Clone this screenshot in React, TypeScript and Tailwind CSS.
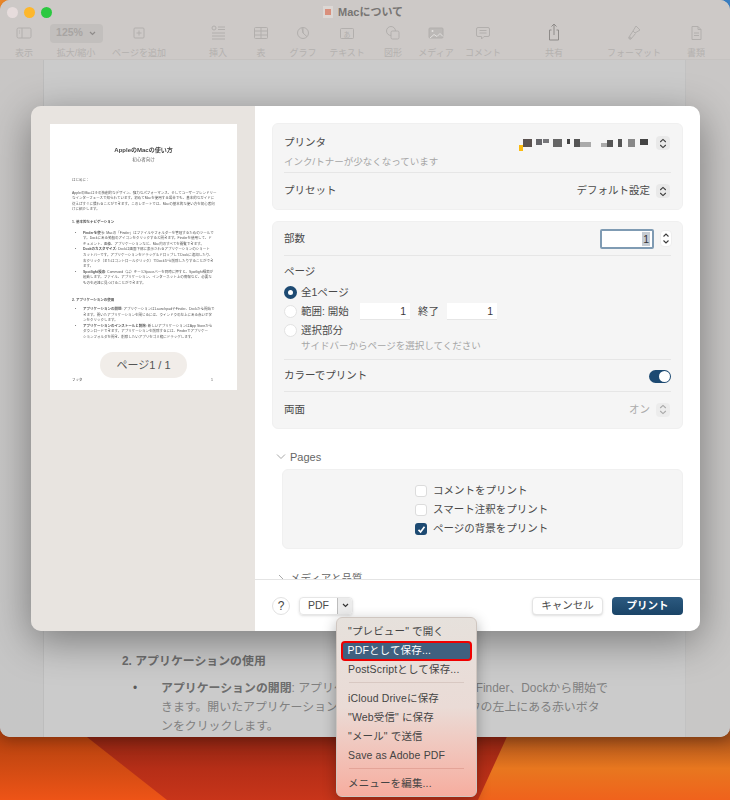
import React from "react";

const TI = ({ children }: { children: React.ReactNode }) => (
  <svg width="24" height="20" viewBox="0 0 24 20" fill="none" stroke="#b2afad" strokeWidth="1">{children}</svg>
);

const Stepper = ({ dim }: { dim?: boolean }) => (
  <div className={dim ? "w-[14px] h-[14px] rounded-[4px] bg-[#ececec] flex items-center justify-center" : "w-[14px] h-[14px] rounded-[4px] bg-[#e9e9e9] flex items-center justify-center"}>
    <svg width="8" height="11" viewBox="0 0 8 11" fill="none" stroke={dim ? "#a8a8a8" : "#3c3c3c"} strokeWidth="1.1">
      <path d="M1.2 4 4 1.4 6.8 4" />
      <path d="M1.2 7 4 9.6 6.8 7" />
    </svg>
  </div>
);

const Tool = ({ cls, label, icon }: { cls: string; label: string; icon: React.ReactNode }) => (
  <div className={"flex flex-col items-center shrink-0 " + cls}>
    <div className="h-[20px] flex items-center justify-center">{icon}</div>
    <div className="mt-[4px] text-[9px] leading-[12px] text-[#b4b1af] whitespace-nowrap">{label}</div>
  </div>
);

const Toolbar = () => (
  <div className="flex pt-[23px]">
    <Tool cls="ml-[6px] w-[36px]" label="表示" icon={<TI><rect x="5" y="5" width="14" height="10" rx="1.5" /><path d="M10 5v10M7 8h1M7 10h1" /></TI>} />
    <Tool cls="ml-[6px] w-[56px]" label="拡大/縮小" icon={
      <div className="w-[53px] h-[19px] rounded-[4px] bg-[#c2bfbd] flex items-center justify-center gap-[6px] text-[10.5px] font-bold text-[#a8a5a3]">125%
        <svg width="7" height="5" viewBox="0 0 7 5" fill="none" stroke="#8f8c8a" strokeWidth="1.2"><path d="M1 1l2.5 2.5L6 1" /></svg>
      </div>} />
    <Tool cls="ml-[5px] w-[60px]" label="ページを追加" icon={<TI><rect x="7" y="5" width="10" height="10" rx="1" /><path d="M12 7.5v5M9.5 10h5" /></TI>} />
    <Tool cls="ml-[34px] w-[30px]" label="挿入" icon={<TI><circle cx="8" cy="5" r="2" /><path d="M12 4h7M12 6.500h7M6 10h13M6 13h13M6 16h13" /></TI>} />
    <Tool cls="ml-[13px] w-[30px]" label="表" icon={<TI><rect x="5.500" y="4.500" width="13" height="11" rx="1" /><path d="M5.500 8h13M5.500 12h13M12 4.500v11" /></TI>} />
    <Tool cls="ml-[10px] w-[34px]" label="グラフ" icon={<TI><circle cx="12" cy="10" r="5.500" /><path d="M12 4.500V10l4 3.700M12 10l-1-5" /></TI>} />
    <Tool cls="ml-[3px] w-[48px]" label="テキスト" icon={<TI><rect x="5.500" y="5.500" width="13" height="10" rx="1" /><text x="12" y="13.500" fontSize="7" textAnchor="middle" stroke="none" fill="#b2afad">あ</text></TI>} />
    <Tool cls="ml-[7px] w-[30px]" label="図形" icon={<TI><circle cx="10" cy="8" r="4.500" /><rect x="10" y="8" width="8" height="8" rx="1.500" fill="#cdc9c7" /></TI>} />
    <Tool cls="ml-[6px] w-[44px]" label="メディア" icon={<TI><rect x="5" y="5" width="14" height="10" rx="1" fill="#bcb9b7" /><circle cx="8.500" cy="8" r="1" fill="#e2e0de" stroke="none" /><path d="M6 15l4-3.500 3 2 3-3 3 3" stroke="#e2e0de" /></TI>} />
    <Tool cls="ml-[3px] w-[44px]" label="コメント" icon={<TI><path d="M7 4.500h10a1.500 1.500 0 0 1 1.500 1.500v6a1.500 1.500 0 0 1-1.500 1.500h-4L10.500 16v-2.500H7A1.500 1.500 0 0 1 5.500 12V6A1.500 1.500 0 0 1 7 4.500Z" /><path d="M8.500 7.500h7M8.500 10h7" /></TI>} />
    <Tool cls="ml-[34px] w-[30px]" label="共有" icon={<svg width="24" height="20" viewBox="0 0 24 20" fill="none" stroke="#8e8b89" strokeWidth="1"><path d="M12 1v11M9.500 3.500 12 1l2.500 2.500M9.500 7H7.500v10h9V7h-2" /></svg>} />
    <Tool cls="ml-[32px] w-[66px]" label="フォーマット" icon={<TI><path d="M14 3l4 4-5 3 -2-2z" /><path d="M11 8l-4 6a1.500 1.500 0 0 0 2 2l4.500-5.500" /><circle cx="8" cy="15" r="1" /></TI>} />
    <Tool cls="ml-[14px] w-[30px]" label="書類" icon={<TI><path d="M8 3.500h6l3 3v10H8z" /><path d="M14 3.500v3h3M10 10h5M10 12.500h5" /></TI>} />
  </div>
);

const Radio = ({ on }: { on?: boolean }) =>
  on ? (
    <div className="w-[13px] h-[13px] rounded-full bg-[#1d4a72] flex items-center justify-center shrink-0">
      <div className="w-[5px] h-[5px] rounded-full bg-white" />
    </div>
  ) : (
    <div className="w-[13px] h-[13px] rounded-full bg-white border border-[#e2e2e2] shrink-0" />
  );

const Check = ({ on }: { on?: boolean }) =>
  on ? (
    <div className="w-[12px] h-[12px] rounded-[3px] bg-[#1d4a72] flex items-center justify-center shrink-0">
      <svg width="9" height="9" viewBox="0 0 9 9" fill="none" stroke="#fff" strokeWidth="1.700"><path d="M1.500 4.800 3.600 7 7.500 1.800" /></svg>
    </div>
  ) : (
    <div className="w-[12px] h-[12px] rounded-[3px] bg-white border border-[#dcdcdc] shrink-0" />
  );

const NumBox = () => (
  <div className="w-[50px] h-[17px] bg-white border-b border-[#e6e6e6] text-right pr-[4px] text-[10.5px] leading-[17px] text-[#3a3a3a]">1</div>
);

const Li = ({ children }: { children: React.ReactNode }) => (
  <div className="flex">
    <span className="w-[11px] pl-[3px] shrink-0">•</span>
    <div className="whitespace-nowrap">{children}</div>
  </div>
);

const Preview = () => (
  <div className="relative w-[187px] h-[266px] bg-white shrink-0 text-[3.5px] leading-[5.6px] text-[#555] overflow-hidden">
    <div className="h-full blur-[0.3px]">
      <div className="pt-[22px] text-center text-[6px] leading-[8px] font-bold text-[#444]">AppleのMacの使い方</div>
      <div className="mt-[3px] text-center text-[4.500px] leading-[6px] text-[#666]">初心者向け</div>
      <div className="px-[22px]">
        <div className="mt-[15px] whitespace-nowrap">はじめに：</div>
        <div className="mt-[7px] whitespace-nowrap">AppleのMacはその独創的なデザイン、強力なパフォーマンス、そしてユーザーフレンドリー<br />なインターフェースで知られています。初めてMacを使用する場合でも、基本的なガイドに<br />従えばすぐに慣れることができます。このレポートでは、Macの基本的な使い方を初心者向<br />けに紹介します。</div>
        <div className="mt-[7px] font-bold whitespace-nowrap">1. 基本的なナビゲーション</div>
        <div className="mt-[5px]">
          <Li><span className="font-bold">Finderを使う</span>: Macの「Finder」はファイルやフォルダーを管理するためのツールで<br />す。Dockにある笑顔のアイコンをクリックすると開きます。Finderを使用して、ド<br />キュメント、画像、アプリケーションなど、Mac内のすべてを閲覧できます。</Li>
          <Li><span className="font-bold">Dockのカスタマイズ</span>: Dockは画面下部に表示されるアプリケーションのショート<br />カットバーです。アプリケーションをドラッグ＆ドロップしてDockに追加したり、<br />右クリック（またはコントロールクリック）でDockから削除したりすることができ<br />ます。</Li>
          <Li><span className="font-bold">Spotlight検索</span>: Command（⌘）キーとSpaceバーを同時に押すと、Spotlight検索が<br />起動します。ファイル、アプリケーション、インターネット上の情報など、必要な<br />ものを迅速に見つけることができます。</Li>
        </div>
        <div className="mt-[11px] font-bold whitespace-nowrap">2. アプリケーションの使用</div>
        <div className="mt-[4px]">
          <Li><span className="font-bold">アプリケーションの開閉</span>: アプリケーションはLaunchpadやFinder、Dockから開始で<br />きます。開いたアプリケーションを閉じるには、ウィンドウの左上にある赤いボタ<br />ンをクリックします。</Li>
          <Li><span className="font-bold">アプリケーションのインストールと削除</span>: 新しいアプリケーションはApp Storeから<br />ダウンロードできます。アプリケーションを削除するには、Finderでアプリケー<br />ションフォルダを開き、削除したいアプリをゴミ箱にドラッグします。</Li>
        </div>
      </div>
      <div className="absolute left-[22px] right-[24px] bottom-[6px] flex justify-between"><span>フッタ</span><span>1</span></div>
    </div>
    <div className="absolute left-[50px] top-[228px] w-[87px] h-[26px] rounded-full bg-[#f1ede9] flex items-center justify-center text-[11px] leading-none text-[#555]">ページ1 / 1</div>
  </div>
);

const Divider = () => <div className="ml-[11px] mr-[11px] h-px bg-[#e6e6e6]" />;

const PrintSettings = () => (
  <div className="flex-1 min-w-0 bg-white flex flex-col text-[10.5px] text-[#4a4a4a]">
    <div className="h-[473px] overflow-hidden pt-[17px] pl-[17px] pr-[17px]">
      <div className="h-[87px] rounded-[6px] bg-[#f5f5f5] border border-[#f0f0f0]">
        <div className="h-[48px] pl-[11px] pr-[12px] pt-[11px] relative">
          <div className="flex items-center justify-between h-[16px]">
            <span>プリンタ</span>
            <div className="flex items-center">
              <svg width="130" height="16" viewBox="0 0 130 16" className="mr-[7px] blur-[0.4px]">
                <rect x="0" y="10" width="4" height="6" fill="#fbbb10" />
                <rect x="4" y="4" width="9" height="8" fill="#5a5250" />
                <rect x="17" y="4" width="6" height="6" fill="#66666a" />
                <rect x="24" y="4" width="6" height="4" fill="#77777a" />
                <rect x="34" y="4" width="9" height="8" fill="#666" />
                <rect x="48" y="4" width="3" height="5" fill="#444" />
                <rect x="55" y="4" width="6" height="8" fill="#555" />
                <rect x="61" y="7" width="11" height="5" fill="#aaa" />
                <rect x="82" y="8" width="6" height="4" fill="#aaa" />
                <rect x="88" y="5" width="6" height="7" fill="#555" />
                <rect x="99" y="4" width="4" height="8" fill="#555" />
                <rect x="109" y="4" width="7" height="8" fill="#888" />
                <rect x="121" y="4" width="8" height="6" fill="#444" />
              </svg>
              <Stepper />
            </div>
          </div>
          <div className="mt-[4px] text-[9.500px] leading-[13px] text-[#a6a6a6]">インク/トナーが少なくなっています</div>
        </div>
        <Divider />
        <div className="h-[36px] pl-[11px] pr-[12px] flex items-center justify-between">
          <span>プリセット</span>
          <div className="flex items-center gap-[6px]"><span>デフォルト設定</span><Stepper /></div>
        </div>
      </div>

      <div className="mt-[11px] h-[208px] rounded-[6px] bg-[#f5f5f5] border border-[#f0f0f0]">
        <div className="h-[33px] pl-[11px] pr-[10px] flex items-center justify-between">
          <span className="pt-px">部数</span>
          <div className="flex items-center gap-[6px]">
            <div className="w-[54px] h-[20px] bg-white border-2 border-[#7f9bb3] rounded-[2px] flex items-center justify-end pr-[2px]">
              <span className="bg-[#c5ccd3] px-px leading-[14px] text-[#333]">1</span>
            </div>
            <div className="w-[12px] h-[17px] bg-white rounded-[4px] border border-[#eeeeee] flex items-center justify-center">
              <svg width="8" height="13" viewBox="0 0 8 13" fill="none" stroke="#3c3c3c" strokeWidth="1.100"><path d="M1.500 4.500 4 2l2.500 2.500M1.500 8.500 4 11l2.500-2.500" /></svg>
            </div>
          </div>
        </div>
        <Divider />
        <div className="h-[103px] pl-[11px] pr-[12px] pt-[8px]">
          <div className="h-[15px] leading-[15px]">ページ</div>
          <div className="mt-[4px] flex flex-col">
            <div className="h-[19px] flex items-center gap-[4px]"><Radio on /><span>全1ページ</span></div>
            <div className="h-[19px] flex items-center gap-[4px]">
              <Radio /><span className="w-[55px]">範囲: 開始</span><NumBox />
              <span className="ml-[4px] w-[25px]">終了</span><NumBox />
            </div>
            <div className="h-[19px] flex items-center gap-[4px]"><Radio /><span>選択部分</span></div>
          </div>
          <div className="pl-[17px] text-[9.500px] leading-[12px] text-[#a6a6a6]">サイドバーからページを選択してください</div>
        </div>
        <Divider />
        <div className="h-[31px] pl-[11px] pr-[11px] pt-px flex items-center justify-between">
          <span>カラーでプリント</span>
          <div className="w-[22px] h-[13px] rounded-full bg-[#1d4a72] flex items-center justify-end pr-px">
            <div className="w-[11px] h-[11px] rounded-full bg-white" />
          </div>
        </div>
        <Divider />
        <div className="h-[35px] pl-[11px] pr-[12px] flex items-center justify-between">
          <span>両面</span>
          <div className="flex items-center gap-[6px] text-[#ababab]"><span>オン</span><Stepper dim /></div>
        </div>
      </div>

      <div className="mt-[20px] h-[16px] flex items-center">
        <svg width="10" height="8" viewBox="0 0 10 8" fill="none" stroke="#a8a8a8" strokeWidth="1" className="ml-[4px]"><path d="M1 1.500 5 5.500l4-4" /></svg>
        <span className="ml-[4px] text-[#666] text-[11px]">Pages</span>
      </div>
      <div className="mt-[4px] ml-[10px] h-[80px] rounded-[6px] bg-[#f5f5f5] border border-[#f0f0f0] flex flex-col justify-center items-start pl-[132px] pt-[2px]">
        <div className="h-[19px] flex items-center gap-[6px]"><Check /><span>コメントをプリント</span></div>
        <div className="h-[19px] flex items-center gap-[6px]"><Check /><span>スマート注釈をプリント</span></div>
        <div className="h-[19px] flex items-center gap-[6px]"><Check on /><span>ページの背景をプリント</span></div>
      </div>
      <div className="mt-[22px] h-[16px] flex items-center">
        <svg width="8" height="10" viewBox="0 0 8 10" fill="none" stroke="#a8a8a8" strokeWidth="1" className="ml-[5px]"><path d="M2 1l4 4-4 4" /></svg>
        <span className="ml-[5px] text-[#666]">メディアと品質</span>
      </div>
    </div>
    <div className="h-[52px] border-t border-[#e4e4e4] pl-[17px] pr-[17px] flex items-center justify-between">
      <div className="flex items-center">
        <div className="w-[18px] h-[18px] rounded-full bg-white border border-[#e2e2e2] flex items-center justify-center text-[12px] text-[#444]">?</div>
        <div className="ml-[9px] flex h-[18px] rounded-[4px] border border-[#e6e6e6] shadow-sm">
          <div className="w-[37px] flex items-center justify-center text-[#4a4a4a]">PDF</div>
          <div className="w-[15px] bg-[#ececec] border-l border-[#bdbdbd] flex items-center justify-center rounded-r-[4px]">
            <svg width="7" height="5" viewBox="0 0 7 5" fill="none" stroke="#333" strokeWidth="1.200"><path d="M1 1l2.500 2.500L6 1" /></svg>
          </div>
        </div>
      </div>
      <div className="flex items-center gap-[9px]">
        <div className="w-[71px] h-[18px] rounded-[4px] bg-white border border-[#e4e4e4] shadow-sm flex items-center justify-center">キャンセル</div>
        <div className="w-[71px] h-[18px] rounded-[4px] bg-gradient-to-b from-[#2c5a80] to-[#1a4467] flex items-center justify-center text-white font-bold">プリント</div>
      </div>
    </div>
  </div>
);

const MenuItem = ({ children }: { children: React.ReactNode }) => (
  <div className="h-[19px] pl-[11px] flex items-center whitespace-nowrap">{children}</div>
);

const Menu = () => (
  <div className="absolute left-[336px] top-[617px] w-[141px] h-[180px] rounded-[6px] border border-[#cfc6c0] bg-gradient-to-b from-[#e6e1dc] via-[#eadbd6] to-[#f6ad9f] shadow-[0_4px_14px_rgba(0,0,0,0.3)] pt-[4px] text-[10.5px] tracking-[0.15px] text-[#444]">
    <MenuItem>"プレビュー" で開く</MenuItem>
    <div className="-my-[0.5px] mx-[4px] h-[20px] rounded-[4px] border-[2.5px] border-[#f00000] bg-[#40607f] text-white flex items-center pl-[4.5px] whitespace-nowrap">PDFとして保存...</div>
    <MenuItem>PostScriptとして保存...</MenuItem>
    <div className="mx-[12px] mt-[3px] mb-[6px] h-px bg-[#d8c8c2]" />
    <MenuItem>iCloud Driveに保存</MenuItem>
    <MenuItem>"Web受信" に保存</MenuItem>
    <MenuItem>"メール" で送信</MenuItem>
    <MenuItem>Save as Adobe PDF</MenuItem>
    <div className="mx-[12px] mt-[3px] mb-[5px] h-px bg-[#e4a498]" />
    <MenuItem>メニューを編集...</MenuItem>
  </div>
);

export default function App() {
  return (
    <div className="relative w-[730px] h-[800px] overflow-hidden font-['Liberation_Sans','Noto_Sans_CJK_JP',sans-serif]">
      <svg className="absolute inset-0" width="730" height="800" viewBox="0 0 730 800">
        <defs>
          <linearGradient id="red" x1="0" y1="737" x2="0" y2="800" gradientUnits="userSpaceOnUse">
            <stop offset="0" stopColor="#8c2412" />
            <stop offset="0.5" stopColor="#b52e17" />
            <stop offset="1" stopColor="#c8351a" />
          </linearGradient>
          <linearGradient id="orL" x1="0" y1="737" x2="0" y2="800" gradientUnits="userSpaceOnUse">
            <stop offset="0" stopColor="#b5420f" />
            <stop offset="1" stopColor="#ee5417" />
          </linearGradient>
          <linearGradient id="orR" x1="0" y1="737" x2="0" y2="800" gradientUnits="userSpaceOnUse">
            <stop offset="0" stopColor="#a8511a" />
            <stop offset="0.5" stopColor="#e8771f" />
            <stop offset="1" stopColor="#f0621c" />
          </linearGradient>
        </defs>
        <rect width="730" height="800" fill="url(#red)" />
        <path d="M0 730H78L167 800H0Z" fill="url(#orL)" />
        <path d="M510 730H730V800H478Z" fill="url(#orR)" />
        <rect x="0" y="0" width="30" height="20" fill="#f08a2a" />
        <rect x="700" y="0" width="30" height="20" fill="#3c83c8" />
      </svg>

      <div className="relative h-[737px] rounded-[10px] overflow-hidden flex flex-col shadow-[0_4px_14px_rgba(0,0,0,0.25)] bg-[#cbcbcb]">
        <div className="h-[60px] bg-[#cdc9c7] border-b border-[#c5c2c0] relative shrink-0">
          <div className="absolute left-[7px] top-[7px] flex gap-[6px]">
            <div className="w-[11px] h-[11px] rounded-full bg-[#e6dcdc]" />
            <div className="w-[11px] h-[11px] rounded-full bg-[#fdb72c]" />
            <div className="w-[11px] h-[11px] rounded-full bg-[#2bc840]" />
          </div>
          <div className="absolute left-[323px] top-[4px] h-[16px] flex items-center gap-[5px]">
            <div className="w-[10px] h-[12px] bg-[#dcd7d4] flex items-center justify-center"><div className="w-[6px] h-[6px] bg-[#d98f7c]" /></div>
            <span className="text-[11px] font-bold text-[#787573]">Macについて</span>
          </div>
          <Toolbar />
        </div>
        <div className="flex-1 flex min-h-0">
          <div className="w-[44px] bg-gradient-to-b from-[#c8c6c5] to-[#c6c6c6] border-r border-[#bdbdbd]" />
          <div className="flex-1 bg-[#cbcbcb] pl-[78px] pt-[592px] text-[11.9px] leading-[19px] text-[#808080] whitespace-nowrap overflow-hidden">
            <div className="font-bold text-[#6d6d6d]">2. アプリケーションの使用</div>
            <div className="mt-[8px] flex">
              <span className="w-[39px] pl-[11px] text-[#5a5a5a]">•</span>
              <div><span className="font-bold text-[#6d6d6d]">アプリケーションの開閉</span>: アプリケーションはLaunchpadやFinder、Dockから開始で<br />きます。開いたアプリケーションを閉じるには、ウィンドウの左上にある赤いボタ<br />ンをクリックします。</div>
            </div>
          </div>
          <div className="w-[45px] bg-gradient-to-b from-[#c9c7c6] to-[#c8c7c6] border-l border-[#c2c2c2]" />
        </div>
      </div>

      <div className="absolute left-[31px] top-[106px] w-[669px] h-[525px] rounded-[10px] overflow-hidden flex shadow-[0_10px_40px_rgba(0,0,0,0.4)]">
        <div className="w-[224px] shrink-0 bg-[#e8e4e0] pl-[19px] pt-[18px]"><Preview /></div>
        <PrintSettings />
      </div>

      <Menu />
    </div>
  );
}
